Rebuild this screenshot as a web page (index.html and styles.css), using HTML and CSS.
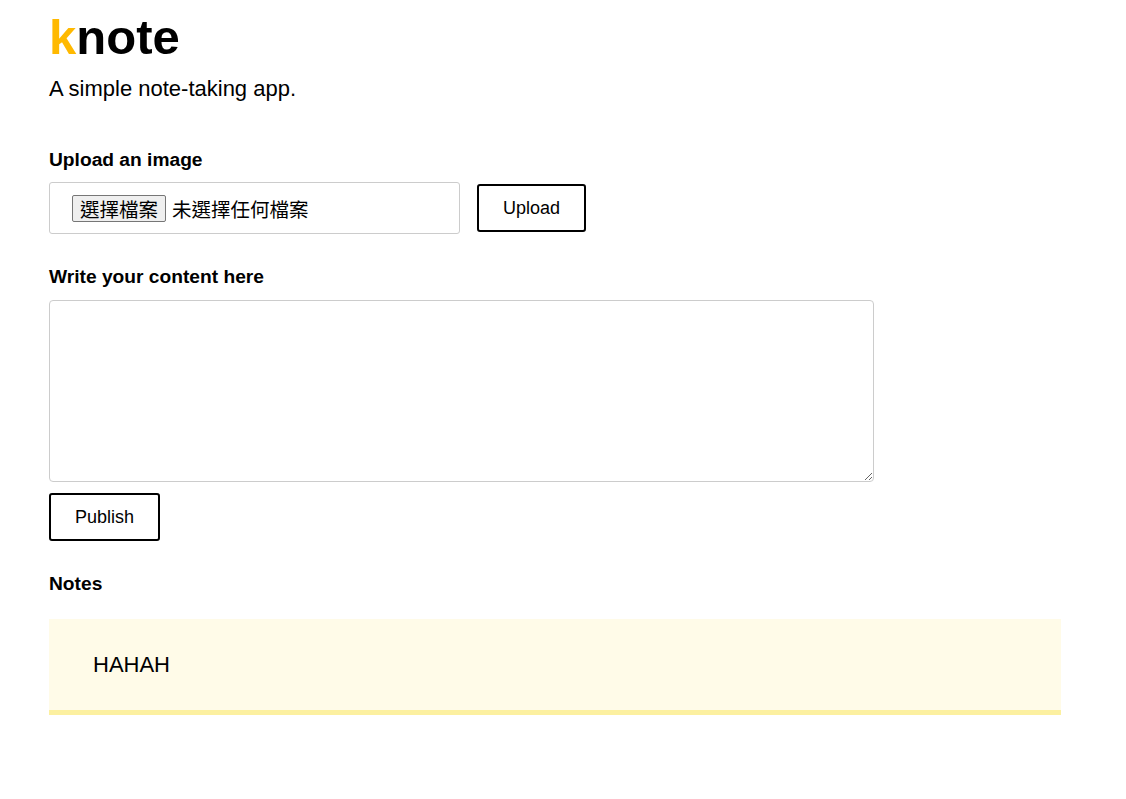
FILE: index.html
```html
<!DOCTYPE html>
<html lang="zh-Hant">
<head>
<meta charset="utf-8">
<title>knote</title>
<link rel="stylesheet" href="styles.css">
</head>
<body>
<main class="page">
  <header class="header">
    <h1 class="logo"><span class="logo-k">k</span>note</h1>
    <p class="tagline">A simple note-taking app.</p>
  </header>

  <section class="section section-upload">
    <h2 class="label">Upload an image</h2>
    <div class="upload-row">
      <label class="file-box">
        <span class="file-btn">選擇檔案</span>
        <span class="file-name">未選擇任何檔案</span>
      </label>
      <button class="btn" type="button">Upload</button>
    </div>
  </section>

  <section class="section section-write">
    <h2 class="label">Write your content here</h2>
    <textarea class="content"></textarea>
    <div class="publish-row">
      <button class="btn" type="button">Publish</button>
    </div>
  </section>

  <section class="section section-notes">
    <h2 class="label">Notes</h2>
    <div class="note">HAHAH</div>
  </section>
</main>
</body>
</html>
```

FILE: styles.css
```css
* { box-sizing: border-box; }

html, body {
  margin: 0;
  padding: 0;
  background: #ffffff;
}

body {
  font-family: "Liberation Sans", Arial, "Noto Sans CJK TC", sans-serif;
  color: #000;
}

.page {
  padding: 9px 49px 40px;
  width: 1110px;
}

.logo {
  margin: 0;
  font-size: 49px;
  font-weight: 700;
  line-height: 57px;
}

.logo-k {
  color: #ffb900;
}

.tagline {
  margin: 10px 0 0;
  font-size: 22px;
  line-height: 25px;
}

.section-upload {
  margin-top: 48px;
}

.label {
  margin: 0;
  font-size: 19.2px;
  font-weight: 700;
  line-height: 22px;
}

.upload-row {
  display: flex;
  align-items: center;
  gap: 17px;
  margin-top: 11px;
}

.file-box {
  display: flex;
  align-items: center;
  gap: 6px;
  width: 411px;
  height: 52px;
  padding: 0 22px;
  border: 1px solid #cccccc;
  border-radius: 3px;
  font-family: "Noto Sans CJK TC", "Liberation Sans", sans-serif;
  font-size: 19.5px;
}

.file-btn {
  display: inline-block;
  height: 27px;
  line-height: 25px;
  padding: 0 7px;
  border: 1px solid #767676;
  border-radius: 2px;
  background: #efefef;
  color: #000;
}

.file-name {
  line-height: 25px;
}

.btn {
  font-family: "Liberation Sans", Arial, sans-serif;
  font-size: 18px;
  line-height: 20px;
  padding: 12px 22px;
  border: 2px solid #000;
  border-radius: 3px;
  background: #fff;
  color: #000;
  height: 48px;
  cursor: pointer;
}

.upload-row .btn {
  width: 109px;
}

.section-write {
  margin-top: 32px;
}

.content {
  display: block;
  margin-top: 12px;
  width: 825px;
  height: 182px;
  border: 1px solid #cccccc;
  border-radius: 4px;
  font-family: "Liberation Sans", Arial, sans-serif;
  font-size: 18px;
  padding: 8px;
}

.publish-row {
  margin-top: 11px;
}

.publish-row .btn {
  width: 111px;
}

.section-notes {
  margin-top: 32px;
}

.note {
  margin-top: 24px;
  width: 1012px;
  background: #fffbe8;
  border-bottom: 5px solid #fcf0a0;
  padding: 33px 44px;
  font-size: 22px;
  line-height: 25px;
}
```
